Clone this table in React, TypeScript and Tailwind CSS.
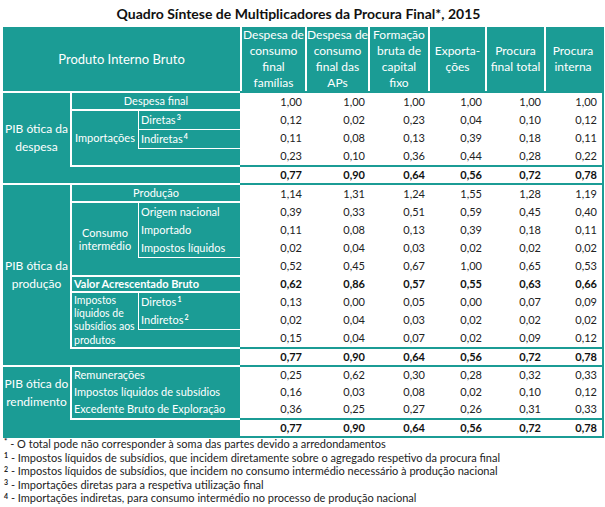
import type { ReactNode } from "react";

const colW = ["w-[65px]", "w-[63px]", "w-[60px]", "w-[57px]", "w-[59px]", "w-[56px]"];

const totals = ["0,77", "0,90", "0,64", "0,56", "0,72", "0,78"];

const DataRow = ({ values, bold, short }: { values: string[]; bold?: boolean; short?: boolean }) => (
  <div className={`flex items-center ${short ? "h-[17px]" : "h-[18px]"} ${bold ? "font-bold text-[#111]" : ""}`}>
    {values.map((v, i) => (
      <div key={i} className={`${colW[i]} pr-[3px] text-right`}>
        {v}
      </div>
    ))}
  </div>
);

const TotalRow = () => (
  <div className="flex h-[18px] items-center border-t-2 border-[#1b9c95] font-bold text-[#111]">
    {totals.map((v, i) => (
      <div key={i} className={`${colW[i]} pr-[3px] text-right`}>
        {v}
      </div>
    ))}
  </div>
);

const Section = ({
  label,
  block,
  rows,
  lowLabel,
  short,
}: {
  label: ReactNode;
  block: ReactNode;
  rows: { v: string[]; bold?: boolean }[];
  lowLabel?: boolean;
  short?: boolean;
}) => (
  <div className="flex">
    <div className="flex w-[237px] border-t-2 border-white bg-[#1b9c95] text-white">
      <div
        className={`flex w-[67px] items-center justify-center whitespace-nowrap text-center text-[12px] leading-[18px] ${
          lowLabel ? "pb-[18px]" : ""
        }`}
      >
        {label}
      </div>
      <div className="flex w-[170px] flex-col">
        <div className="border-b-2 border-l-2 border-white">{block}</div>
        <div className="h-[16px]" />
      </div>
    </div>
    <div className="flex flex-1 flex-col border-t-2 border-[#1b9c95]">
      {rows.map((r, i) => (
        <DataRow key={i} values={r.v} bold={r.bold} short={short} />
      ))}
      <TotalRow />
    </div>
  </div>
);

const Item = ({ children, short }: { children: ReactNode; short?: boolean }) => (
  <div className={`flex items-center whitespace-nowrap pl-[2px] ${short ? "h-[17px]" : "h-[18px]"}`}>
    {children}
  </div>
);

const Sup = ({ n }: { n: string }) => (
  <sup className="ml-[1px] text-[7px] font-bold">{n}</sup>
);

export default function App() {
  return (
    <div className="h-[507px] w-[605px] overflow-hidden bg-white font-['Lato','Noto_Sans',sans-serif] text-[11px] text-[#222]">
      <div className="flex h-[27px] items-center justify-center pr-[8px] text-[14px] font-bold text-[#111]">
        Quadro Síntese de Multiplicadores da Procura Final*, 2015
      </div>

      <div className="ml-[3px] w-[601px] border-b-2 border-r-2 border-[#1b9c95]">
        {/* header */}
        <div className="flex h-[64px] bg-[#1b9c95] text-[12px] leading-[16px] text-white">
          <div className="flex w-[237px] items-center justify-center text-[13px]">
            Produto Interno Bruto
          </div>
          <div className="flex w-[65px] items-center justify-center border-l-2 border-white text-center">
            Despesa de<br />consumo<br />final<br />famílias
          </div>
          <div className="flex w-[63px] items-center justify-center border-l-2 border-white text-center">
            Despesa de<br />consumo<br />final das<br />APs
          </div>
          <div className="flex w-[60px] items-center justify-center border-l-2 border-white text-center">
            Formação<br />bruta de<br />capital<br />fixo
          </div>
          <div className="flex w-[57px] items-center justify-center border-l-2 border-white text-center">
            Exporta-<br />ções
          </div>
          <div className="flex w-[59px] items-center justify-center border-l-2 border-white text-center">
            Procura<br />final total
          </div>
          <div className="flex w-[56px] items-center justify-center border-l-2 border-white text-center">
            Procura<br />interna
          </div>
        </div>

        <Section
          label={<>PIB ótica da<br />despesa</>}
          rows={[
            { v: ["1,00", "1,00", "1,00", "1,00", "1,00", "1,00"] },
            { v: ["0,12", "0,02", "0,23", "0,04", "0,10", "0,12"] },
            { v: ["0,11", "0,08", "0,13", "0,39", "0,18", "0,11"] },
            { v: ["0,23", "0,10", "0,36", "0,44", "0,28", "0,22"] },
          ]}
          block={
            <>
              <div className="flex h-[18px] items-center justify-center border-b-2 border-white">
                Despesa final
              </div>
              <div className="flex h-[54px]">
                <div className="flex w-[66px] items-center justify-center">Importações</div>
                <div className="flex w-[102px] flex-col">
                  <div className="border-b border-l border-white">
                    <Item>
                      Diretas<Sup n="3" />
                    </Item>
                  </div>
                  <div className="border-b border-l border-white">
                    <Item>
                      Indiretas<Sup n="4" />
                    </Item>
                  </div>
                </div>
              </div>
            </>
          }
        />

        <Section
          label={<>PIB ótica da<br />produção</>}
          rows={[
            { v: ["1,14", "1,31", "1,24", "1,55", "1,28", "1,19"] },
            { v: ["0,39", "0,33", "0,51", "0,59", "0,45", "0,40"] },
            { v: ["0,11", "0,08", "0,13", "0,39", "0,18", "0,11"] },
            { v: ["0,02", "0,04", "0,03", "0,02", "0,02", "0,02"] },
            { v: ["0,52", "0,45", "0,67", "1,00", "0,65", "0,53"] },
            { v: ["0,62", "0,86", "0,57", "0,55", "0,63", "0,66"], bold: true },
            { v: ["0,13", "0,00", "0,05", "0,00", "0,07", "0,09"] },
            { v: ["0,02", "0,04", "0,03", "0,02", "0,02", "0,02"] },
            { v: ["0,15", "0,04", "0,07", "0,02", "0,09", "0,12"] },
          ]}
          block={
            <>
              <div className="flex h-[18px] items-center justify-center border-b-2 border-white">
                Produção
              </div>
              <div className="flex h-[72px]">
                <div className="flex w-[66px] items-center justify-center text-center leading-[13px]">
                  Consumo<br />intermédio
                </div>
                <div className="w-[102px]">
                  <div className="border-b border-l border-white">
                    <Item>Origem nacional</Item>
                    <Item>Importado</Item>
                    <Item>Impostos líquidos</Item>
                  </div>
                </div>
              </div>
              <div className="flex h-[18px] items-center whitespace-nowrap border-y-2 border-white pl-[2px] font-bold">
                Valor Acrescentado Bruto
              </div>
              <div className="flex h-[54px]">
                <div className="w-[66px] whitespace-nowrap pl-[2px] pt-[1px] text-[10.5px] leading-[13.2px]">
                  Impostos<br />líquidos de<br />subsídios aos<br />produtos
                </div>
                <div className="w-[102px]">
                  <div className="border-b border-l border-white">
                    <Item>
                      Diretos<Sup n="1" />
                    </Item>
                    <Item>
                      Indiretos<Sup n="2" />
                    </Item>
                  </div>
                </div>
              </div>
            </>
          }
        />

        <Section
          lowLabel
          short
          label={<>PIB ótica do<br />rendimento</>}
          rows={[
            { v: ["0,25", "0,62", "0,30", "0,28", "0,32", "0,33"] },
            { v: ["0,16", "0,03", "0,08", "0,02", "0,10", "0,12"] },
            { v: ["0,36", "0,25", "0,27", "0,26", "0,31", "0,33"] },
          ]}
          block={
            <>
              <Item short>Remunerações</Item>
              <Item short>Impostos líquidos de subsídios</Item>
              <Item short>Excedente Bruto de Exploração</Item>
            </>
          }
        />
      </div>

      <div className="-mt-[1px] pl-[4px] text-[11px] leading-[13.5px] text-[#222]">
        <div><sup className="text-[8px] font-bold">*</sup> - O total pode não corresponder à soma das partes devido a arredondamentos</div>
        <div><sup className="text-[7px] font-bold">1</sup> - Impostos líquidos de subsídios, que incidem diretamente sobre o agregado respetivo da procura final</div>
        <div><sup className="text-[7px] font-bold">2</sup> - Impostos líquidos de subsídios, que incidem no consumo intermédio necessário à produção nacional</div>
        <div><sup className="text-[7px] font-bold">3</sup> - Importações diretas para a respetiva utilização final</div>
        <div><sup className="text-[7px] font-bold">4</sup> - Importações indiretas, para consumo intermédio no processo de produção nacional</div>
      </div>
    </div>
  );
}
